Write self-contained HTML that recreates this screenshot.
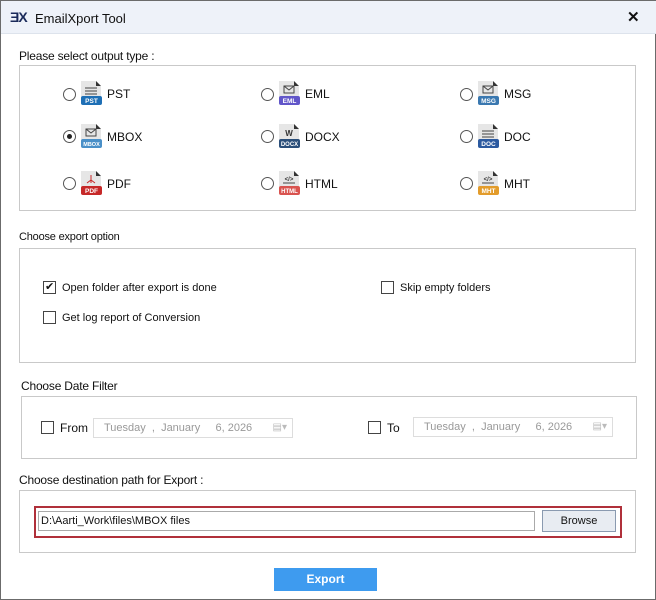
<!DOCTYPE html><html><head><style>
*{margin:0;padding:0;box-sizing:border-box}
body{width:656px;height:600px;background:#fff;font-family:"Liberation Sans",sans-serif;font-size:12px;color:#111;position:relative;overflow:hidden;border:1px solid #6b6b6b}
.a{position:absolute}
.tb{left:0;top:0;width:656px;height:33px;background:#eef2f9;border-bottom:1px solid #dde3ec}
.box{position:absolute;border:1px solid #c9c9c9}
.lbl{position:absolute;font-size:12px;letter-spacing:-0.2px}
.rad{position:absolute;width:13px;height:13px;border:1px solid #555;border-radius:50%;background:#fff}
.rad.on::after{content:"";position:absolute;left:3px;top:3px;width:5px;height:5px;border-radius:50%;background:#222}
.cb{position:absolute;width:13px;height:13px;border:1px solid #444;background:#fff}
.t{position:absolute;font-size:12px}
.date{position:absolute;height:20px;border:1px solid #ddd;color:#999;font-size:11px;line-height:18px;white-space:pre;padding-left:10px;overflow:hidden}
.cal{position:absolute;right:5px;top:0;color:#bbb;font-size:10px}
</style></head><body>
<div class="a tb"></div>
<div class="a" style="left:9px;top:8px;font-weight:bold;font-size:14px;color:#1a2a5a;letter-spacing:-1px">ƎX</div>
<div class="a" style="left:34px;top:10px;font-size:13px">EmailXport Tool</div>
<div class="a" style="left:626px;top:7px;font-size:15px;font-weight:bold">✕</div>

<div class="lbl" style="left:18px;top:48px">Please select output type :</div>
<div class="box" style="left:18px;top:64px;width:617px;height:146px"></div>

<div class="lbl" style="left:18px;top:230px;font-size:11px">Choose export option</div>
<div class="box" style="left:18px;top:247px;width:617px;height:115px"></div>
<div class="cb" style="left:42px;top:280px"><span style="position:absolute;left:1px;top:-2px;font-size:11px">✔</span></div>
<div class="t" style="left:61px;top:281px;font-size:11px">Open folder after export is done</div>
<div class="cb" style="left:42px;top:310px"></div>
<div class="t" style="left:61px;top:311px;font-size:11px">Get log report of Conversion</div>
<div class="cb" style="left:380px;top:280px"></div>
<div class="t" style="left:399px;top:281px;font-size:11px">Skip empty folders</div>

<div class="lbl" style="left:20px;top:378px">Choose Date Filter</div>
<div class="box" style="left:20px;top:395px;width:616px;height:63px"></div>
<div class="cb" style="left:40px;top:420px"></div>
<div class="t" style="left:59px;top:420px">From</div>
<div class="date" style="left:92px;top:417px;width:200px">Tuesday  ,  January     6, 2026<span class="cal">▤▾</span></div>
<div class="cb" style="left:367px;top:420px"></div>
<div class="t" style="left:386px;top:420px">To</div>
<div class="date" style="left:412px;top:416px;width:200px">Tuesday  ,  January     6, 2026<span class="cal">▤▾</span></div>

<div class="lbl" style="left:18px;top:472px">Choose destination path for Export :</div>
<div class="box" style="left:18px;top:489px;width:617px;height:63px"></div>
<div class="a" style="left:33px;top:505px;width:588px;height:32px;border:2px solid #b0303a"></div>
<div class="a" style="left:37px;top:510px;width:497px;height:20px;border:1px solid #aaa;font-size:11px;line-height:18px;padding-left:2px">D:\Aarti_Work\files\MBOX files</div>
<div class="a" style="left:541px;top:509px;width:74px;height:22px;border:1px solid #8a9ab0;background:#e8ecf2;font-size:11px;text-align:center;line-height:20px">Browse</div>
<div class="a" style="left:273px;top:567px;width:103px;height:23px;background:#3e9bef;color:#fff;font-weight:bold;text-align:center;line-height:23px">Export</div>

<svg class="a" style="left:0;top:0" width="656" height="220">
<defs><g id="doc"><path d="M0 0h15l5 5v18h-20z" fill="#e6e6e6"/><path d="M15 0l5 5h-5z" fill="#333"/></g></defs>
<g font-family="Liberation Sans" font-size="6.5" font-weight="bold" fill="#fff" text-anchor="middle">
<g transform="translate(80,80)"><use href="#doc"/><path d="M4 7h12M4 10h12M4 13h12" stroke="#444"/><rect x="0" y="15" width="21" height="9" rx="2" fill="#1e6fb5"/><text x="10.5" y="22">PST</text></g>
<g transform="translate(278,80)"><use href="#doc"/><rect x="5" y="5" width="10" height="7" fill="none" stroke="#444"/><path d="M5 5l5 4 5-4" fill="none" stroke="#444"/><rect x="0" y="15" width="21" height="9" rx="2" fill="#6156c9"/><text x="10.5" y="22">EML</text></g>
<g transform="translate(477,80)"><use href="#doc"/><rect x="5" y="5" width="10" height="7" fill="none" stroke="#444"/><path d="M5 5l5 4 5-4" fill="none" stroke="#444"/><rect x="0" y="15" width="21" height="9" rx="2" fill="#3a78b0"/><text x="10.5" y="22">MSG</text></g>
<g transform="translate(80,123)"><use href="#doc"/><rect x="5" y="5" width="10" height="7" fill="none" stroke="#444"/><path d="M5 5l5 4 5-4" fill="none" stroke="#444"/><rect x="0" y="15" width="21" height="9" rx="2" fill="#4a90c8"/><text x="10.5" y="22" font-size="5.5">MBOX</text></g>
<g transform="translate(278,123)"><use href="#doc"/><text x="10" y="12" fill="#333" font-size="8">W</text><rect x="0" y="15" width="21" height="9" rx="2" fill="#2b4f7a"/><text x="10.5" y="22" font-size="6">DOCX</text></g>
<g transform="translate(477,123)"><use href="#doc"/><path d="M4 7h12M4 10h12M4 13h12" stroke="#444"/><rect x="0" y="15" width="21" height="9" rx="2" fill="#2c5aa0"/><text x="10.5" y="22">DOC</text></g>
<g transform="translate(80,170)"><use href="#doc"/><path d="M10 4v8M6 12l4-3 4 3" stroke="#c62828" fill="none"/><rect x="0" y="15" width="21" height="9" rx="2" fill="#c62828"/><text x="10.5" y="22">PDF</text></g>
<g transform="translate(278,170)"><use href="#doc"/><text x="10" y="10" fill="#333" font-size="6">&lt;/&gt;</text><path d="M4 12h12" stroke="#444"/><rect x="0" y="15" width="21" height="9" rx="2" fill="#d9534f"/><text x="10.5" y="22" font-size="6">HTML</text></g>
<g transform="translate(477,170)"><use href="#doc"/><text x="10" y="10" fill="#333" font-size="6">&lt;/&gt;</text><path d="M4 12h12" stroke="#444"/><rect x="0" y="15" width="21" height="9" rx="2" fill="#e39c2b"/><text x="10.5" y="22">MHT</text></g>
</g>
</svg>
<div class="rad" style="left:62px;top:87px"></div><div class="t" style="left:106px;top:86px">PST</div>
<div class="rad" style="left:260px;top:87px"></div><div class="t" style="left:304px;top:86px">EML</div>
<div class="rad" style="left:459px;top:87px"></div><div class="t" style="left:503px;top:86px">MSG</div>
<div class="rad on" style="left:62px;top:129px"></div><div class="t" style="left:106px;top:129px">MBOX</div>
<div class="rad" style="left:260px;top:129px"></div><div class="t" style="left:304px;top:129px">DOCX</div>
<div class="rad" style="left:459px;top:129px"></div><div class="t" style="left:503px;top:129px">DOC</div>
<div class="rad" style="left:62px;top:176px"></div><div class="t" style="left:106px;top:176px">PDF</div>
<div class="rad" style="left:260px;top:176px"></div><div class="t" style="left:304px;top:176px">HTML</div>
<div class="rad" style="left:459px;top:176px"></div><div class="t" style="left:503px;top:176px">MHT</div>
</body></html>
